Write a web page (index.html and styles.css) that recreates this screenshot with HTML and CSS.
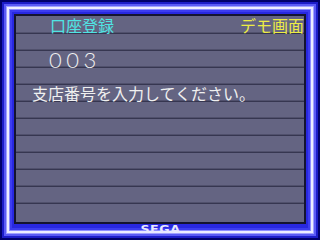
FILE: index.html
```html
<!DOCTYPE html>
<html lang="ja">
<head>
    <meta charset="UTF-8">
    <title>口座登録</title>
    <link rel="stylesheet" href="styles.css">
</head>
<body>
    <div class="screen">
        <div class="panel">
            <div class="row head">
                <span class="title">口座登録</span>
                <span class="demo">デモ画面</span>
            </div>
            <div class="row"></div>
            <div class="row"><span class="code">003</span></div>
            <div class="row"></div>
            <div class="row"><span class="msg">支店番号を入力してください。</span></div>
            <div class="row"></div>
            <div class="row"></div>
            <div class="row"></div>
            <div class="row"></div>
            <div class="row"></div>
            <div class="row"></div>
            <div class="row last"></div>
        </div>
        <div class="footer"><span class="logo">SEGA</span></div>
    </div>
</body>
</html>
```

FILE: styles.css
```css
body {
    margin: 0;
    background: #000060;
}
.screen {
    width: 320px;
    height: 240px;
    box-sizing: border-box;
    padding: 14px 14px 0 14px;
    background: #2828e0;
    box-shadow:
        inset 0 0 0 2px #00006a,
        inset 0 0 0 4px #1c1cc8,
        inset 0 0 0 6px #5a5af5,
        inset 0 0 0 7px #a0a0ff,
        inset 0 0 0 9px #ececff,
        inset 0 0 0 10px #8c8cff,
        inset 0 0 0 12px #3c3cf0;
    font-family: "Noto Sans CJK JP", sans-serif;
}
.panel {
    height: 210px;
    box-sizing: border-box;
    border: 2px solid #141430;
    background: #646482;
    padding-top: 1px;
}
.row {
    height: 17px;
    box-sizing: border-box;
    border-bottom: 1px solid #363650;
    box-shadow: inset 0 -1px 0 #50506c;
    line-height: 16px;
    font-size: 16px;
    color: #f0f0f0;
    white-space: nowrap;
}
.row.last {
    border-bottom: none;
    box-shadow: none;
}
.head {
    display: flex;
    justify-content: space-between;
}
.title {
    color: #50e4e4;
    padding-left: 34px;
}
.demo {
    color: #ecec44;
}
.code {
    display: inline-block;
    padding-left: 33px;
    font-family: Lato, sans-serif;
    font-weight: 300;
    font-size: 22px;
    line-height: 16px;
    letter-spacing: 4.5px;
    transform: translateY(1px);
}
.msg {
    padding-left: 16px;
}
.footer {
    height: 16px;
    display: flex;
    justify-content: center;
}
.logo {
    font-family: "DejaVu Sans", sans-serif;
    font-weight: bold;
    font-size: 11px;
    line-height: 11px;
    color: #e8e8ff;
    letter-spacing: 0.5px;
    transform: scaleX(1.15);
}
```
